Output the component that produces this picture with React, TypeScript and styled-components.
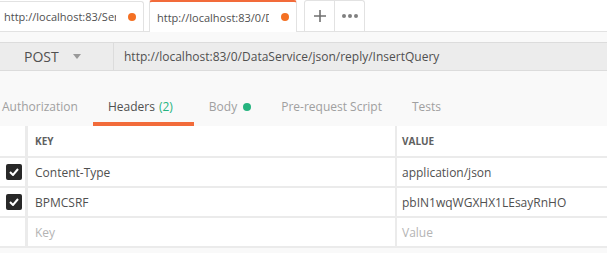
import React from 'react';
import styled, { createGlobalStyle } from 'styled-components';

const GlobalStyle = createGlobalStyle`
  html, body {
    margin: 0;
    padding: 0;
    background: #f9f9f9;
    overflow: hidden;
  }
  body {
    font-family: "Open Sans", "Liberation Sans", sans-serif;
    font-size: 12px;
    color: #505050;
  }
`;

const headers = [
  { key: 'Content-Type', value: 'application/json' },
  { key: 'BPMCSRF', value: 'pbIN1wqWGXHX1LEsayRnHO' },
];

const App: React.FC = () => {
  return (
    <Page>
      <GlobalStyle />
      <TabBar>
        <Tab>
          <TabTitle>http://localhost:83/ServiceQuery</TabTitle>
          <Dot />
        </Tab>
        <Tab $active>
          <TabTitle>http://localhost:83/0/DataService</TabTitle>
          <Dot />
        </Tab>
        <TabActions>
          <ActionButton>
            <svg width="14" height="14" viewBox="0 0 14 14">
              <path d="M7 1v12M1 7h12" stroke="#707070" strokeWidth="1.6" />
            </svg>
          </ActionButton>
          <ActionButton>
            <svg width="18" height="6" viewBox="0 0 18 6">
              <circle cx="3" cy="3" r="2" fill="#808080" />
              <circle cx="9" cy="3" r="2" fill="#808080" />
              <circle cx="15" cy="3" r="2" fill="#808080" />
            </svg>
          </ActionButton>
        </TabActions>
      </TabBar>

      <RequestBar>
        <Method>
          POST
          <Caret />
        </Method>
        <Url>http://localhost:83/0/DataService/json/reply/InsertQuery</Url>
      </RequestBar>

      <SectionTabs>
        <SectionTab>Authorization</SectionTab>
        <SectionTab $active>
          Headers <Count>(2)</Count>
        </SectionTab>
        <SectionTab>
          Body <GreenDot />
        </SectionTab>
        <SectionTab>Pre-request Script</SectionTab>
        <SectionTab>Tests</SectionTab>
      </SectionTabs>

      <Table>
        <Row>
          <CheckCell />
          <HeadCell>Key</HeadCell>
          <HeadCell>Value</HeadCell>
        </Row>
        {headers.map((h) => (
          <Row key={h.key}>
            <CheckCell>
              <CheckBox>
                <svg width="10" height="8" viewBox="0 0 10 8">
                  <path d="M1 4l3 3 5-6" stroke="#fff" strokeWidth="2" fill="none" />
                </svg>
              </CheckBox>
            </CheckCell>
            <Cell>{h.key}</Cell>
            <Cell>{h.value}</Cell>
          </Row>
        ))}
        <Row>
          <CheckCell />
          <Cell $placeholder>Key</Cell>
          <Cell $placeholder>Value</Cell>
        </Row>
      </Table>
    </Page>
  );
};

const Page = styled.div`
  width: 607px;
  height: 253px;
  overflow: hidden;
  background: #f9f9f9;
`;

const TabBar = styled.div`
  display: flex;
  align-items: flex-end;
  height: 31px;
  background: #fff;
  border-bottom: 1px solid #e2e2e2;
  margin-left: -4px;
`;

const Tab = styled.div<{ $active?: boolean }>`
  display: flex;
  align-items: center;
  box-sizing: border-box;
  flex: none;
  width: 148px;
  height: ${(p) => (p.$active ? '32px' : '30px')};
  margin-right: 5px;
  margin-bottom: ${(p) => (p.$active ? '-1px' : '0')};
  padding: 0 7px;
  background: #fff;
  border: 1px solid #e2e2e2;
  border-top: ${(p) => (p.$active ? '2px solid #f26b3a' : '1px solid #e2e2e2')};
  border-bottom: none;
  border-radius: 3px 3px 0 0;
`;

const TabTitle = styled.span`
  display: block;
  flex: none;
  width: 112px;
  overflow: hidden;
  white-space: nowrap;
  font-size: 11px;
  color: #505050;
`;

const Dot = styled.span`
  flex: none;
  width: 8px;
  height: 8px;
  margin-left: 12px;
  border-radius: 50%;
  background: #f47023;
`;

const TabActions = styled.div`
  display: flex;
  height: 30px;
  margin-left: 2px;
  border: 1px solid #e2e2e2;
  border-bottom: none;
  border-radius: 3px 3px 0 0;
`;

const ActionButton = styled.div`
  display: flex;
  align-items: center;
  justify-content: center;
  width: 29px;
  & + & {
    border-left: 1px solid #e2e2e2;
  }
`;

const RequestBar = styled.div`
  display: flex;
  height: 27px;
  margin-top: 10px;
  background: #ececec;
  border-top: 1px solid #dcdcdc;
  border-bottom: 1px solid #dcdcdc;
`;

const Method = styled.div`
  display: flex;
  align-items: center;
  width: 89px;
  padding-left: 24px;
  font-size: 14px;
  color: #505050;
  border-right: 1px solid #dcdcdc;
`;

const Caret = styled.span`
  margin-left: 14px;
  width: 0;
  height: 0;
  border-left: 4px solid transparent;
  border-right: 4px solid transparent;
  border-top: 5px solid #999;
`;

const Url = styled.div`
  display: flex;
  align-items: center;
  padding-left: 10px;
  font-size: 12px;
  color: #505050;
  white-space: nowrap;
`;

const SectionTabs = styled.div`
  display: flex;
  margin-top: 20px;
  margin-left: -13px;
  height: 35px;
`;

const SectionTab = styled.div<{ $active?: boolean }>`
  display: flex;
  align-items: center;
  box-sizing: border-box;
  padding: 0 ${(p) => (p.$active ? '21px' : '15px')} 0 15px;
  font-size: 12px;
  white-space: nowrap;
  color: ${(p) => (p.$active ? '#505050' : '#a0a0a0')};
  border-bottom: 4px solid ${(p) => (p.$active ? '#f26b3a' : 'transparent')};
`;

const Count = styled.span`
  margin-left: 4px;
  color: #26b47f;
`;

const GreenDot = styled.span`
  width: 8px;
  height: 8px;
  margin-left: 6px;
  border-radius: 50%;
  background: #26b47f;
`;

const Table = styled.div`
  display: flex;
  flex-direction: column;
  background: #fff;
`;

const Row = styled.div`
  display: grid;
  grid-template-columns: 28px 367px 1fr;
  height: 28px;
  border-bottom: 2px solid #ebebeb;
  &:first-child {
    height: 30px;
  }
`;

const CheckCell = styled.div`
  display: flex;
  align-items: center;
  justify-content: center;
  border-right: 3px solid #ebebeb;
  padding-left: 3px;
`;

const CheckBox = styled.div`
  display: flex;
  align-items: center;
  justify-content: center;
  width: 16px;
  height: 16px;
  border-radius: 2px;
  background: #282828;
`;

const HeadCell = styled.div`
  display: flex;
  align-items: center;
  padding-left: 7px;
  font-size: 10px;
  font-weight: 700;
  text-transform: uppercase;
  color: #606060;
  & + & {
    border-left: 2px solid #ebebeb;
    padding-left: 5px;
  }
`;

const Cell = styled.div<{ $placeholder?: boolean }>`
  display: flex;
  align-items: center;
  padding-left: 7px;
  font-size: 12px;
  color: ${(p) => (p.$placeholder ? '#b4b4b4' : '#505050')};
  & + & {
    border-left: 2px solid #ebebeb;
    padding-left: 5px;
  }
`;

export default App;
